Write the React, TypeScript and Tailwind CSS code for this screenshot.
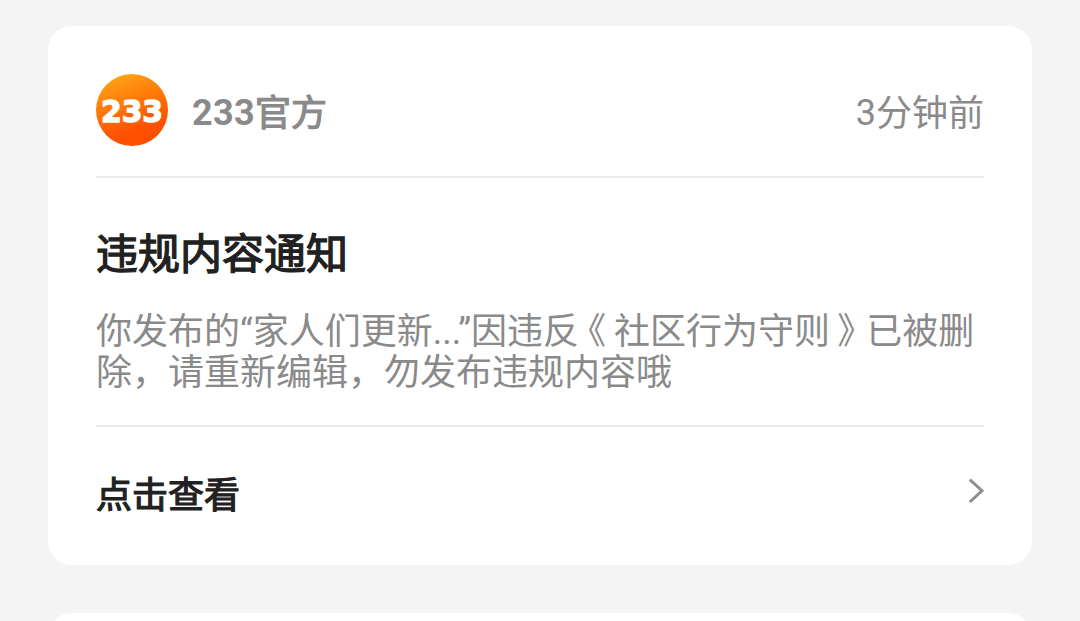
import { ReactNode } from 'react';

const OfficialLogo = () => (
  <svg className="size-[72px] shrink-0" viewBox="0 0 72 72">
    <defs>
      <linearGradient id="logo-bg" x1="0.15" y1="0" x2="0.5" y2="1">
        <stop offset="0" stopColor="#ffa816" />
        <stop offset="0.5" stopColor="#ff7309" />
        <stop offset="0.8" stopColor="#ff5202" />
        <stop offset="1" stopColor="#ff4d00" />
      </linearGradient>
    </defs>
    <circle cx="36" cy="36" r="36" fill="url(#logo-bg)" />
    <text
      x="5"
      y="47.5"
      textLength="62"
      lengthAdjust="spacingAndGlyphs"
      className="fill-white stroke-white stroke-[1.4] font-['DejaVu_Sans',sans-serif] text-[31px] font-bold"
    >
      233
    </text>
  </svg>
);

const ChevronRight = () => (
  <svg className="h-[26px] w-4 shrink-0" viewBox="0 0 16 26" fill="none">
    <path d="M1.8 1.6 L14 12.7 L1.8 24" stroke="#8f8f8f" strokeWidth="3" />
  </svg>
);

interface NoticeCardProps {
  sender: ReactNode;
  time: ReactNode;
  title: string;
  action: string;
  children: ReactNode;
}

const NoticeCard = ({ sender, time, title, action, children }: NoticeCardProps) => (
  <section className="h-[539px] shrink-0 rounded-3xl bg-white px-12 pt-12">
    <header className="flex h-[104px] items-start border-b-2 border-[#ebebeb]">
      <OfficialLogo />
      <span className="ml-6 pt-[18px] text-4xl leading-[42px] text-[#8a8a8a]">{sender}</span>
      <time className="ml-auto pt-[18px] text-4xl leading-[42px] text-[#8a8a8a]">{time}</time>
    </header>

    <div className="h-[249px] border-b-2 border-[#ebebeb] pt-[52px]">
      <h2 className="text-[42px] leading-[50px] text-[#212121] [-webkit-text-stroke:1.3px_#212121]">{title}</h2>
      <p className="mt-8 text-4xl leading-[41px] text-[#8a8a8a]">{children}</p>
    </div>

    <div className="flex items-start justify-between pt-12">
      <span className="text-4xl leading-[42px] text-[#212121] [-webkit-text-stroke:1.2px_#212121]">{action}</span>
      <span className="pt-[3px]">
        <ChevronRight />
      </span>
    </div>
  </section>
);

export default function App() {
  return (
    <main className="flex h-[621px] flex-col gap-12 overflow-hidden bg-[#f4f4f4] px-12 pt-[26px] font-['Roboto','Noto_Sans_CJK_SC',sans-serif]">
      <NoticeCard
        sender={
          <>
            <span className="font-bold tracking-[0.3px]">233</span>
            <span className="align-[-1px] [-webkit-text-stroke:1.2px_#8a8a8a]">官方</span>
          </>
        }
        time={
          <>
            3<span className="align-[-1px]">分钟前</span>
          </>
        }
        title="违规内容通知"
        action="点击查看"
      >
        {/* half-width title marks, padded so the glyph sits centred in its cell */}
        你发布的“家人们更新...”因违反
        <span className="mr-2 ml-[9px] [font-feature-settings:'halt']">《</span>社区行为守则
        <span className="mr-[11px] ml-[7px] [font-feature-settings:'halt']">》</span>已被删
        <br />
        除，请重新编辑，勿发布违规内容哦
      </NoticeCard>

      {/* next notice in the list */}
      <section className="h-20 shrink-0 rounded-3xl bg-white" />
    </main>
  );
}
